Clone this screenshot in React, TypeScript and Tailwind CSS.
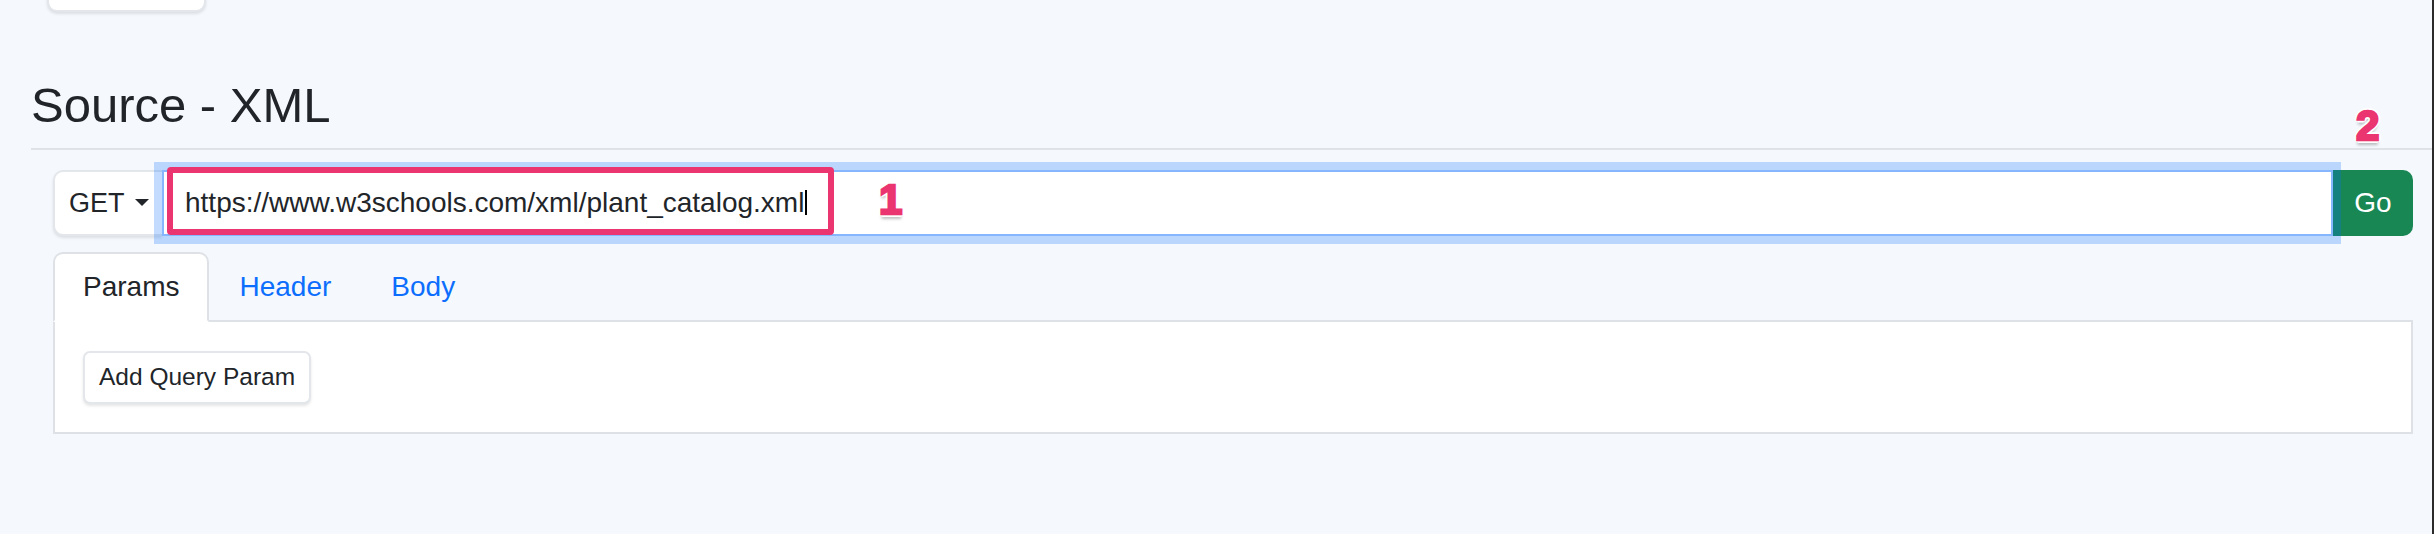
import React from 'react';

const url = 'https://www.w3schools.com/xml/plant_catalog.xml';

const tabs = ['Params', 'Header', 'Body'];

// pink numbered callouts laid over the screenshot
function Callout({ n, className }: { n: string; className: string }) {
  return (
    <span
      className={`absolute text-[42px] font-bold leading-none text-[#ea3570] [-webkit-text-stroke:2.5px_#ea3570] [text-shadow:3px_0_0_#fff,-3px_0_0_#fff,0_3px_0_#fff,0_-3px_0_#fff,2px_2px_0_#fff,-2px_2px_0_#fff,2px_-2px_0_#fff,-2px_-2px_0_#fff,0_5px_3px_rgba(0,0,0,0.25)] ${className}`}
    >
      {n}
    </span>
  );
}

export default function App() {
  return (
    <div className="flex min-h-[534px] w-full bg-[#f5f9fd] font-['Liberation_Sans',Arial,sans-serif] text-[#212529]">
      <div className="flex-1 pl-[31px]">
        {/* button left over from the section above */}
        <div className="ml-[16px] -mt-[48px] h-[60px] w-[159px] rounded-[10px] border-2 border-[#e3e6ea] bg-white shadow-[0_2px_3px_rgba(0,0,0,0.1)]" />

        <h3 className="mt-[64px] text-[49px] font-normal leading-[1.2]">Source - XML</h3>
        <div className="mt-[13px] h-[2px] bg-[#dfe2e6]" />

        <div className="relative ml-[22px] mr-[19px] mt-[20px] flex h-[66px]">
          <button className="flex h-[66px] w-[109px] items-center rounded-l-[10px] border-2 border-r-0 border-[#e3e6ea] bg-white pl-[14px] text-[27px] shadow-[0_2px_3px_rgba(0,0,0,0.1)]">
            GET
            <svg width="14" height="7" viewBox="0 0 14 7" className="ml-[10px]">
              <polygon points="0,0 14,0 7,7" fill="#212529" />
            </svg>
          </button>

          <div className="relative z-10 flex h-[66px] flex-1 items-center border-2 border-[#86b7fe] bg-white px-[21px] text-[28px] shadow-[0_0_0_8px_rgba(13,110,253,0.25)]">
            <span>{url}</span>
            <span className="ml-px h-[25px] w-[2px] bg-black" />
            <div className="absolute -top-[5px] left-[3px] h-[68px] w-[667px] rounded-[4px] border-[6px] border-[#ea3570]" />
          </div>

          <button className="h-[66px] w-[80px] rounded-r-[10px] bg-[#198754] text-[28px] text-white">Go</button>

          <Callout n="1" className="left-[826px] top-[9px] z-20" />
          <Callout n="2" className="left-[2303px] -top-[65px]" />
        </div>

        <div className="ml-[22px] mr-[19px] mt-[16px]">
          <div className="flex border-b-2 border-[#dee2e6]">
            {tabs.map((t, i) => (
              <div
                key={t}
                className={
                  i === 0
                    ? '-mb-[2px] rounded-t-[10px] border-2 border-[#dee2e6] border-b-white bg-white px-[28px] py-[12px] text-[28px] leading-[1.5] text-[#212529]'
                    : '-mb-[2px] rounded-t-[10px] border-2 border-transparent px-[28px] py-[12px] text-[28px] leading-[1.5] text-[#0d6efd]'
                }
              >
                {t}
              </div>
            ))}
          </div>
          <div className="border-2 border-t-0 border-[#dee2e6] bg-white px-[28px] pb-[28px] pt-[29px]">
            <button className="h-[53px] rounded-[7px] border-2 border-[#e3e6ea] bg-white px-[14px] text-[24.5px] leading-[1.5] shadow-[0_2px_3px_rgba(0,0,0,0.1)]">
              Add Query Param
            </button>
          </div>
        </div>
      </div>
      <div className="w-[2px] self-stretch bg-[#2b2b2b]" />
      <div className="w-[2px] self-stretch bg-white" />
    </div>
  );
}
